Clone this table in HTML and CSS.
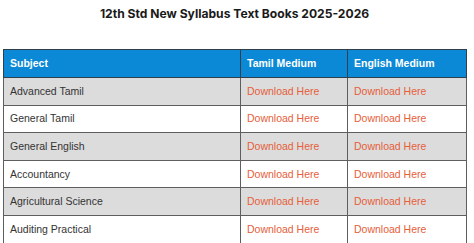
FILE: index.html
```html
<!DOCTYPE html>
<html>
<head>
<meta charset="utf-8">
<link rel="stylesheet" href="styles.css">
</head>
<body>
<div class="page">
  <h2 class="title">12th Std New Syllabus Text Books 2025-2026</h2>
  <table class="books">
    <thead>
      <tr><th class="c1">Subject</th><th class="c2">Tamil Medium</th><th class="c3">English Medium</th></tr>
    </thead>
    <tbody>
      <tr class="odd"><td>Advanced Tamil</td><td><a href="#">Download Here</a></td><td><a href="#">Download Here</a></td></tr>
      <tr><td>General Tamil</td><td><a href="#">Download Here</a></td><td><a href="#">Download Here</a></td></tr>
      <tr class="odd"><td>General English</td><td><a href="#">Download Here</a></td><td><a href="#">Download Here</a></td></tr>
      <tr><td>Accountancy</td><td><a href="#">Download Here</a></td><td><a href="#">Download Here</a></td></tr>
      <tr class="odd"><td>Agricultural Science</td><td><a href="#">Download Here</a></td><td><a href="#">Download Here</a></td></tr>
      <tr><td>Auditing Practical</td><td><a href="#">Download Here</a></td><td><a href="#">Download Here</a></td></tr>
    </tbody>
  </table>
</div>
</body>
</html>
```
FILE: styles.css
```css
html, body {
  margin: 0;
  padding: 0;
  background: #ffffff;
}
.page {
  padding: 0 0 0 3px;
  width: 463px;
}
.title {
  margin: 0;
  padding-top: 7px;
  height: 49px;
  box-sizing: border-box;
  text-align: center;
  font-family: Inter, "Noto Sans", sans-serif;
  font-weight: 700;
  font-size: 12.1px;
  line-height: 14px;
  color: #1a1a1a;
}
.books {
  width: 463px;
  border-collapse: collapse;
  table-layout: fixed;
  font-family: "Liberation Sans", Arial, sans-serif;
  font-size: 10.5px;
}
.c1 { width: 237px; }
.c2 { width: 107px; }
.c3 { width: 119px; }
.books th, .books td {
  border: 1px solid #5e5e5e;
  padding: 0 6px;
  height: 27.6px;
  text-align: left;
  vertical-align: middle;
  line-height: 13px;
  box-sizing: border-box;
}
.books th {
  background: #0b89d6;
  color: #ffffff;
  font-weight: 700;
  border-color: #2f3f4c;
  height: 28px;
}
.books td {
  color: #333333;
}
.books tr.odd td {
  background: #dcdcdc;
}
.books a {
  color: #e65e3a;
  text-decoration: none;
}
```
